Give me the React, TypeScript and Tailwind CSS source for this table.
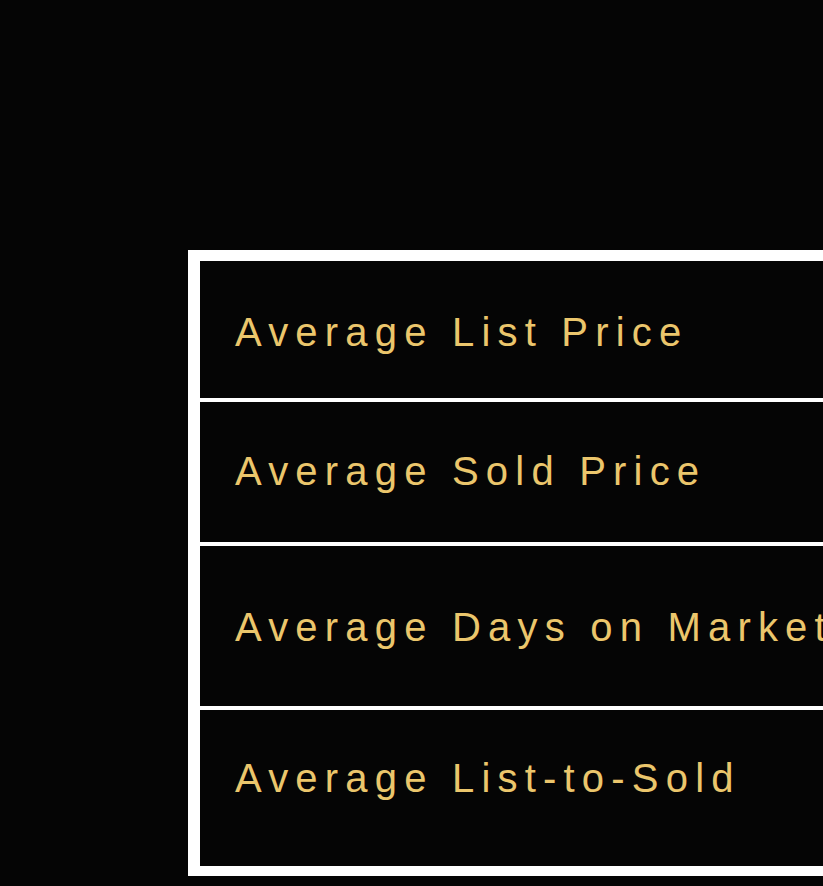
const rows = [
  { label: 'Average List Price', cls: 'h-[141px] pt-[51px]' },
  { label: 'Average Sold Price', cls: 'h-[144px] pt-[49px]' },
  { label: 'Average Days on Market', cls: 'h-[164px] pt-[61px]' },
  { label: 'Average List-to-Sold', cls: 'h-[156px] pt-[48px]' },
];

export default function App() {
  return (
    <div className="min-h-[886px] w-full overflow-hidden bg-[#050505] pt-[250px] pl-[188px]">
      <div className="w-[900px] border-l-[12px] border-t-[11px] border-b-[10px] border-white bg-[#050505] divide-y-4 divide-white">
        {rows.map((r) => (
          <div key={r.label} className={`${r.cls} pl-[35px]`}>
            <p className="whitespace-nowrap text-[40px] leading-[40px] tracking-[0.18em] text-[#ebc66c] font-['Liberation_Sans',Arial,sans-serif]">
              {r.label}
            </p>
          </div>
        ))}
      </div>
    </div>
  );
}
